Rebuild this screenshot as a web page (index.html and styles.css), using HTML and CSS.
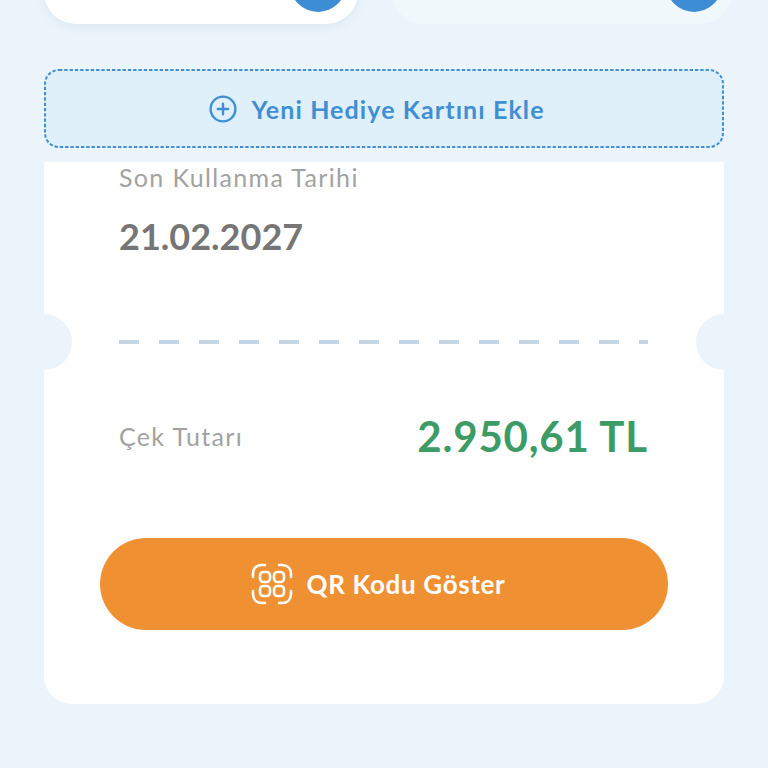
FILE: index.html
```html
<!DOCTYPE html>
<html lang="tr">
<head>
  <meta charset="UTF-8" />
  <meta name="viewport" content="width=device-width, initial-scale=1.0"/>
  <title>Hediye Kartlarım</title>
  <link rel="stylesheet" href="styles.css">
</head>
<body>
  <div class="top-cards">
    <div class="mini-card"><div class="mini-dot"></div></div>
    <div class="mini-card faded"><div class="mini-dot"></div></div>
  </div>

  <button class="add-card">
    <svg class="add-border" viewBox="0 0 680 79" fill="none">
      <rect x="1" y="1" width="678" height="77" rx="14" stroke="#3f8fd2" stroke-width="2" stroke-dasharray="3.300 2"/>
    </svg>
    <svg class="add-icon" viewBox="0 0 28 28" fill="none" stroke="#3f8fd2" stroke-width="2.4" stroke-linecap="round">
      <circle cx="14" cy="14" r="12.4"/>
      <path d="M14 8.8v10.4M8.8 14h10.4"/>
    </svg>
    <span>Yeni Hediye Kartını Ekle</span>
  </button>

  <div class="ticket">
    <div class="notch left"></div>
    <div class="notch right"></div>

    <div class="expiry">
      <div class="label">Son Kullanma Tarihi</div>
      <div class="date">21.02.2027</div>
    </div>

    <div class="divider"></div>

    <div class="amount-row">
      <span class="label">Çek Tutarı</span>
      <span class="amount">2.950,61 TL</span>
    </div>

    <button class="qr-button">
      <svg class="qr-icon" viewBox="0 0 42 42" fill="none" stroke="#fff" stroke-width="2.6" stroke-linecap="round">
        <path d="M2 14V11C2 5.5 5.5 2 11 2h3M28 2h3c5.500 0 9 3.500 9 9v3M40 28v3c0 5.500-3.500 9-9 9h-3M14 40h-3c-5.500 0-9-3.500-9-9v-3"/>
        <rect x="9" y="9" width="10" height="10" rx="3.500"/>
        <rect x="23" y="9" width="10" height="10" rx="3.500"/>
        <rect x="9" y="23" width="10" height="10" rx="3.500"/>
        <rect x="23" y="23" width="10" height="10" rx="3.500"/>
      </svg>
      <span>QR Kodu Göster</span>
    </button>
  </div>
</body>
</html>
```

FILE: styles.css
```css
:root {
  --bg: #ebf4fa;
  --blue: #3f8fd2;
  --grey: #a2a2a2;
}

body {
  margin: 0;
  padding: 0 44px;
  height: 768px;
  overflow: hidden;
  background: var(--bg);
  font-family: 'Lato', sans-serif;
}

button {
  font-family: inherit;
  cursor: pointer;
}

.top-cards {
  display: flex;
  gap: 34px;
  margin: -40px -8px 0 0;
}

.mini-card {
  flex: 0 0 314px;
  height: 64px;
  background: #fff;
  border-radius: 40px;
  box-shadow: 0 3px 10px rgba(120, 160, 190, 0.14);
  display: flex;
  justify-content: flex-end;
  overflow: hidden;
}

.mini-card.faded {
  flex-basis: 340px;
  background: #f1f8fc;
  box-shadow: none;
}

.mini-dot {
  width: 56px;
  height: 56px;
  margin: -4px 12px 0 0;
  border-radius: 50%;
  background: #3c8dd3;
}

.mini-card.faded .mini-dot {
  margin-right: 10px;
}

.add-card {
  position: relative;
  box-sizing: border-box;
  width: 680px;
  height: 79px;
  margin-top: 45px;
  padding: 0 14px 0 0;
  display: flex;
  align-items: center;
  justify-content: center;
  gap: 14px;
  background: #dff0fa;
  border: none;
  border-radius: 14px;
  color: var(--blue);
  font-size: 25px;
  font-weight: 700;
  letter-spacing: 1.1px;
}

.add-border {
  position: absolute;
  top: 0;
  left: 0;
  width: 680px;
  height: 79px;
}

.add-icon {
  width: 28px;
  height: 28px;
}

.ticket {
  position: relative;
  box-sizing: border-box;
  width: 680px;
  height: 542px;
  margin-top: 14px;
  padding: 0 56px 0 75px;
  background: #fff;
  border-radius: 0 0 28px 28px;
  overflow: hidden;
}

.notch {
  position: absolute;
  top: 152px;
  width: 56px;
  height: 56px;
  border-radius: 50%;
  background: var(--bg);
}

.notch.left { left: -28px; }
.notch.right { right: -28px; }

.label {
  color: var(--grey);
  font-size: 25px;
  letter-spacing: 1.35px;
}

.expiry .label {
  line-height: 30px;
}

.date {
  margin-top: 22px;
  color: #767676;
  font-size: 36px;
  font-weight: 700;
  line-height: 44px;
}

.divider {
  height: 4px;
  margin: 82px 20px 0 0;
  background: repeating-linear-gradient(to right, #c2d6e5 0, #c2d6e5 20px, transparent 20px, transparent 40px);
}

.amount-row {
  display: flex;
  justify-content: space-between;
  align-items: center;
  height: 60px;
  margin: 62px 20px 0 0;
}

.amount {
  color: #3d9b66;
  font-size: 42px;
  font-weight: 700;
  letter-spacing: 0.8px;
}

.qr-button {
  display: flex;
  align-items: center;
  justify-content: center;
  gap: 14px;
  width: 568px;
  height: 92px;
  margin: 72px 0 0 -19px;
  padding: 0 12px 0 0;
  border: none;
  border-radius: 46px;
  background: #ef9033;
  color: #fff;
  font-size: 26px;
  font-weight: 700;
  letter-spacing: 0.65px;
}

.qr-icon {
  width: 42px;
  height: 42px;
}
```
